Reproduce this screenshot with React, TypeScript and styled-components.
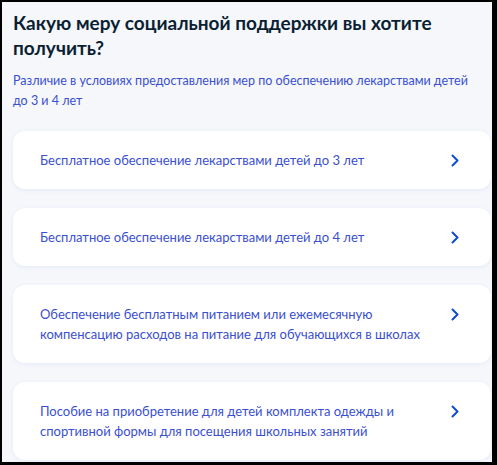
import * as React from 'react';
import styled, { createGlobalStyle } from 'styled-components';

const GlobalStyle = createGlobalStyle`
  html, body {
    margin: 0;
    padding: 0;
    background: #000;
  }
  * {
    box-sizing: border-box;
  }
`;

const Frame = styled.div`
  width: 497px;
  height: 465px;
  border-style: solid;
  border-color: #000;
  border-width: 2px 5px 3px 2px;
  background-color: #f5f7fb;
  overflow: hidden;
  font-family: Lato, 'Noto Sans', sans-serif;
`;

const Content = styled.div`
  display: flex;
  flex-direction: column;
  padding: 8px 0 0 11px;
`;

const Title = styled.h1`
  margin: 0 0 11px 0;
  font-size: 19px;
  line-height: 25px;
  font-weight: 700;
  color: #0b1f33;
  padding-right: 20px;
`;

const Subtitle = styled.p`
  margin: 0 0 20px 0;
  padding-right: 10px;
  font-size: 12.5px;
  line-height: 20px;
  color: #3a4fd0;
`;

const List = styled.div`
  display: flex;
  flex-direction: column;
  gap: 19px;
`;

const Card = styled.div`
  display: flex;
  justify-content: space-between;
  align-items: flex-start;
  width: 478px;
  padding: 19px 32px 19px 27px;
  background-color: #fff;
  border-radius: 12px;
  box-shadow: 0 1px 4px rgba(40, 80, 160, 0.08);
  cursor: pointer;
`;

const CardText = styled.span`
  max-width: 390px;
  font-size: 13px;
  line-height: 20px;
  color: #3a4fd0;
`;

const Arrow = styled.span`
  display: flex;
  align-items: center;
  height: 20px;
  flex-shrink: 0;
`;

const Chevron = () => (
  <svg width="8" height="13" viewBox="0 0 8 13" fill="none">
    <path d="M1.5 1.5l5 5-5 5" stroke="#0d4cd3" strokeWidth="2" strokeLinecap="round" strokeLinejoin="round" />
  </svg>
);

const items = [
  'Бесплатное обеспечение лекарствами детей до 3 лет',
  'Бесплатное обеспечение лекарствами детей до 4 лет',
  'Обеспечение бесплатным питанием или ежемесячную компенсацию расходов на питание для обучающихся в школах',
  'Пособие на приобретение для детей комплекта одежды и спортивной формы для посещения школьных занятий',
];

export default function App() {
  return (
    <>
      <GlobalStyle />
      <Frame>
        <Content>
          <Title>Какую меру социальной поддержки вы хотите получить?</Title>
          <Subtitle>Различие в условиях предоставления мер по обеспечению лекарствами детей до 3 и 4 лет</Subtitle>
          <List>
            {items.map(text => (
              <Card key={text}>
                <CardText>{text}</CardText>
                <Arrow>
                  <Chevron />
                </Arrow>
              </Card>
            ))}
          </List>
        </Content>
      </Frame>
    </>
  );
}
